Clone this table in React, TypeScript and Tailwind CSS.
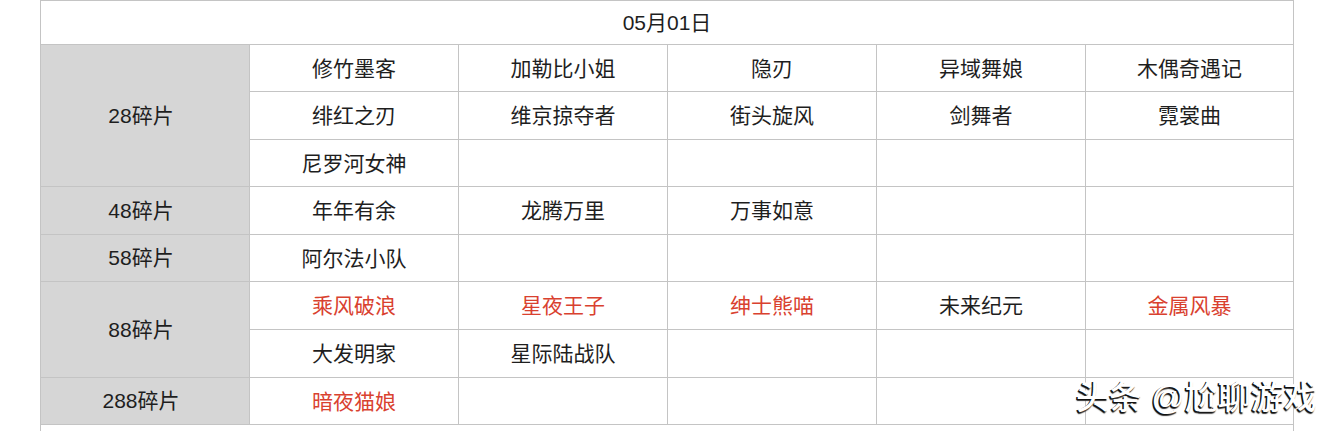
type Cell = { text: string; red?: boolean };

interface Group {
    label: string;
    rows: Cell[][];
}

const r = (text: string): Cell => ({ text, red: true });
const b = (text: string): Cell => ({ text });
const e: Cell = { text: "" };

const groups: Group[] = [
    {
        label: "28碎片",
        rows: [
            [b("修竹墨客"), b("加勒比小姐"), b("隐刃"), b("异域舞娘"), b("木偶奇遇记")],
            [b("绯红之刃"), b("维京掠夺者"), b("街头旋风"), b("剑舞者"), b("霓裳曲")],
            [b("尼罗河女神"), e, e, e, e],
        ],
    },
    { label: "48碎片", rows: [[b("年年有余"), b("龙腾万里"), b("万事如意"), e, e]] },
    { label: "58碎片", rows: [[b("阿尔法小队"), e, e, e, e]] },
    {
        label: "88碎片",
        rows: [
            [r("乘风破浪"), r("星夜王子"), r("绅士熊喵"), b("未来纪元"), r("金属风暴")],
            [b("大发明家"), b("星际陆战队"), e, e, e],
        ],
    },
    { label: "288碎片", rows: [[r("暗夜猫娘"), e, e, e, e]] },
];

// pixel pitch of each body row, read off the screenshot
const heights = ["h-[47px]", "h-[48px]", "h-[47px]", "h-[48px]", "h-[47px]", "h-[48px]", "h-[48px]", "h-[47px]"];

export default function App() {
    let rowIndex = 0;

    return (
        <div
            className="relative w-[1334px] h-[431px] overflow-hidden bg-white text-[#1e1e1e]"
            style={{ fontFamily: '"Liberation Sans", "Noto Sans CJK SC", sans-serif' }}
        >
            <table className="ml-[40px] w-[1253px] table-fixed border-collapse text-[21px] leading-[28px]">
                <colgroup>
                    <col className="w-[209px]" />
                    <col className="w-[209px]" />
                    <col className="w-[209px]" />
                    <col className="w-[209px]" />
                    <col className="w-[209px]" />
                    <col className="w-[208px]" />
                </colgroup>
                <tbody>
                    <tr className="h-[44px]">
                        <td colSpan={6} className="border border-[#c4c4c4] text-center align-middle p-0">
                            05月01日
                        </td>
                    </tr>
                    {groups.map((group) =>
                        group.rows.map((cells, i) => {
                            const h = heights[rowIndex++];
                            return (
                                <tr key={group.label + i} className={h}>
                                    {i === 0 && (
                                        <td
                                            rowSpan={group.rows.length}
                                            className="border border-[#c4c4c4] bg-[#d6d6d6] text-center align-middle p-0 pr-2"
                                        >
                                            {group.label}
                                        </td>
                                    )}
                                    {cells.map((cell, j) => (
                                        <td
                                            key={j}
                                            className={`border border-[#c4c4c4] text-center align-middle p-0 pt-[1px] ${cell.red ? "text-[#d9412f]" : ""}`}
                                        >
                                            {cell.text}
                                        </td>
                                    ))}
                                </tr>
                            );
                        })
                    )}
                    <tr className="h-[44px]">
                        <td colSpan={6} className="border border-[#c4c4c4] p-0"></td>
                    </tr>
                </tbody>
            </table>

            <div
                className="absolute left-[1076px] top-[377px] text-[33px] leading-[42px] font-medium text-white whitespace-nowrap"
                style={{ textShadow: "-1.5px 1px 0 #111, -1px 1.5px 1px #333" }}
            >
                头条 @尬聊游戏
            </div>
        </div>
    );
}
